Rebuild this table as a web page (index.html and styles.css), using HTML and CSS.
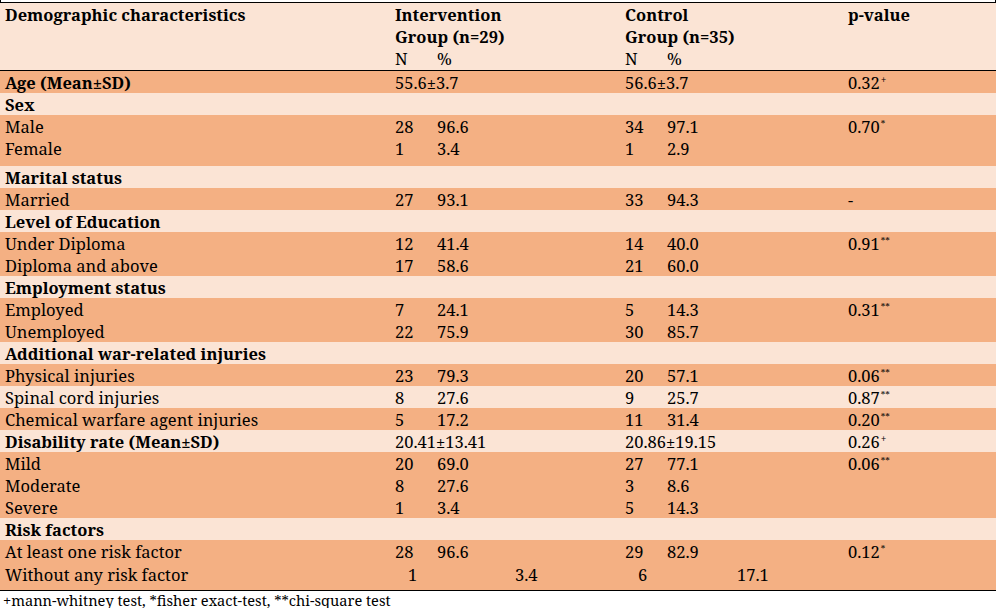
FILE: index.html
```html
<!DOCTYPE html>
<html lang="en">
<head>
<meta charset="utf-8">
<title>Demographic characteristics</title>
<link rel="stylesheet" href="styles.css">
</head>
<body>
<div class="frame"></div>
<table class="tbl">
  <colgroup>
    <col class="c1"><col class="c2"><col class="c3"><col class="c4">
  </colgroup>
  <thead>
    <tr class="light head">
      <th>Demographic characteristics</th>
      <th>Intervention<br>Group (n=29)<br><span class="np"><span class="n">N</span>%</span></th>
      <th>Control<br>Group (n=35)<br><span class="np"><span class="n">N</span>%</span></th>
      <th>p-value</th>
    </tr>
  </thead>
  <tbody>
    <tr class="dark"><td class="b">Age (Mean±SD)</td><td>55.6±3.7</td><td>56.6±3.7</td><td>0.32<sup class="plus">+</sup></td></tr>
    <tr class="light"><td class="b">Sex</td><td></td><td></td><td></td></tr>
    <tr class="dark"><td>Male</td><td><span class="n">28</span>96.6</td><td><span class="n">34</span>97.1</td><td>0.70<sup>*</sup></td></tr>
    <tr class="dark gap"><td>Female</td><td><span class="n">1</span>3.4</td><td><span class="n">1</span>2.9</td><td></td></tr>
    <tr class="light"><td class="b">Marital status</td><td></td><td></td><td></td></tr>
    <tr class="dark"><td>Married</td><td><span class="n">27</span>93.1</td><td><span class="n">33</span>94.3</td><td>-</td></tr>
    <tr class="light"><td class="b">Level of Education</td><td></td><td></td><td></td></tr>
    <tr class="dark"><td>Under Diploma</td><td><span class="n">12</span>41.4</td><td><span class="n">14</span>40.0</td><td>0.91<sup>**</sup></td></tr>
    <tr class="dark"><td>Diploma and above</td><td><span class="n">17</span>58.6</td><td><span class="n">21</span>60.0</td><td></td></tr>
    <tr class="light"><td class="b">Employment status</td><td></td><td></td><td></td></tr>
    <tr class="dark"><td>Employed</td><td><span class="n">7</span>24.1</td><td><span class="n">5</span>14.3</td><td>0.31<sup>**</sup></td></tr>
    <tr class="dark"><td>Unemployed</td><td><span class="n">22</span>75.9</td><td><span class="n">30</span>85.7</td><td></td></tr>
    <tr class="light"><td class="b">Additional war-related injuries</td><td></td><td></td><td></td></tr>
    <tr class="dark"><td>Physical injuries</td><td><span class="n">23</span>79.3</td><td><span class="n">20</span>57.1</td><td>0.06<sup>**</sup></td></tr>
    <tr class="light"><td>Spinal cord injuries</td><td><span class="n">8</span>27.6</td><td><span class="n">9</span>25.7</td><td>0.87<sup>**</sup></td></tr>
    <tr class="dark"><td>Chemical warfare agent injuries</td><td><span class="n">5</span>17.2</td><td><span class="n">11</span>31.4</td><td>0.20<sup>**</sup></td></tr>
    <tr class="light"><td class="b">Disability rate (Mean±SD)</td><td>20.41±13.41</td><td>20.86±19.15</td><td>0.26<sup class="plus">+</sup></td></tr>
    <tr class="dark"><td>Mild</td><td><span class="n">20</span>69.0</td><td><span class="n">27</span>77.1</td><td>0.06<sup>**</sup></td></tr>
    <tr class="dark"><td>Moderate</td><td><span class="n">8</span>27.6</td><td><span class="n">3</span>8.6</td><td></td></tr>
    <tr class="dark"><td>Severe</td><td><span class="n">1</span>3.4</td><td><span class="n">5</span>14.3</td><td></td></tr>
    <tr class="light"><td class="b">Risk factors</td><td></td><td></td><td></td></tr>
    <tr class="dark"><td>At least one risk factor</td><td><span class="n">28</span>96.6</td><td><span class="n">29</span>82.9</td><td>0.12<sup>*</sup></td></tr>
    <tr class="dark gap2 last"><td>Without any risk factor</td><td><span class="n wide-i">1</span>3.4</td><td><span class="n wide-c">6</span>17.1</td><td></td></tr>
  </tbody>
</table>
<p class="note">+mann-whitney test, *fisher exact-test, **chi-square test</p>
</body>
</html>
```
FILE: styles.css
```css
html, body {
  margin: 0;
  padding: 0;
  background: #ffffff;
}

body {
  width: 996px;
  font-family: "Noto Serif", "DejaVu Serif", serif;
  font-size: 16.5px;
  color: #000000;
}

.frame {
  height: 2px;
  border-left: 1px solid #000;
  border-right: 1px solid #000;
  border-bottom: 1px solid #000;
  box-sizing: content-box;
  width: 994px;
}

.tbl {
  width: 996px;
  border-collapse: collapse;
  table-layout: fixed;
}

.c1 { width: 390px; }
.c2 { width: 230px; }
.c3 { width: 223px; }
.c4 { width: 153px; }

.tbl th,
.tbl td {
  padding: 2px 0 0 5px;
  height: 20px;
  line-height: 20px;
  text-align: left;
  vertical-align: top;
  white-space: nowrap;
  font-weight: 400;
}

.head th {
  padding-top: 1px;
  height: 66px;
  line-height: 22px;
  font-weight: 700;
  border-bottom: 1px solid #000;
}

.np {
  font-weight: 400;
}

.n {
  display: inline-block;
  width: 42px;
}

.tbl td.b {
  font-weight: 700;
}

.dark { background: #f4b083; }
.light { background: #fbe4d5; }

.gap td {
  padding-bottom: 7px;
}

.gap2 td {
  padding-bottom: 5px;
  padding-top: 3px;
}

.last td {
  border-bottom: 1px solid #000;
}

.wide-i {
  width: 120px;
  padding-left: 13px;
  box-sizing: border-box;
}

.wide-c {
  width: 112px;
  padding-left: 13px;
  box-sizing: border-box;
}

sup {
  font-size: 9px;
  line-height: 0;
  vertical-align: 6px;
  margin-left: 1px;
}

sup.plus {
  font-size: 10px;
  vertical-align: 5px;
}

.note {
  margin: 1px 0 0 3px;
  font-size: 14.6px;
  line-height: 16px;
}
```
